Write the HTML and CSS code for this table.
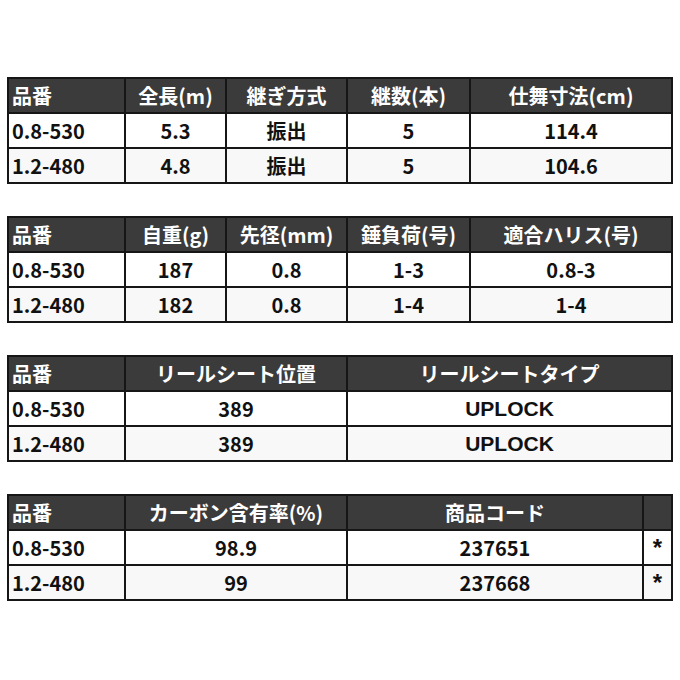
FILE: index.html
```html
<!DOCTYPE html>
<html lang="ja">
<head>
<meta charset="utf-8">
<link rel="stylesheet" href="styles.css">
</head>
<body>
<div class="page">
  <table class="spec">
    <colgroup><col class="c117"><col class="c101"><col class="c121"><col class="c123"><col></colgroup>
    <tr class="head"><th class="first">品番</th><th>全長(m)</th><th>継ぎ方式</th><th>継数(本)</th><th>仕舞寸法(cm)</th></tr>
    <tr class="r1"><td class="first">0.8-530</td><td>5.3</td><td>振出</td><td>5</td><td>114.4</td></tr>
    <tr class="r2"><td class="first">1.2-480</td><td>4.8</td><td>振出</td><td>5</td><td>104.6</td></tr>
  </table>
  <table class="spec">
    <colgroup><col class="c117"><col class="c101"><col class="c121"><col class="c123"><col></colgroup>
    <tr class="head"><th class="first">品番</th><th>自重(g)</th><th>先径(mm)</th><th>錘負荷(号)</th><th>適合ハリス(号)</th></tr>
    <tr class="r1"><td class="first">0.8-530</td><td>187</td><td>0.8</td><td>1-3</td><td>0.8-3</td></tr>
    <tr class="r2"><td class="first">1.2-480</td><td>182</td><td>0.8</td><td>1-4</td><td>1-4</td></tr>
  </table>
  <table class="spec">
    <colgroup><col class="c117"><col class="c222"><col></colgroup>
    <tr class="head"><th class="first">品番</th><th>リールシート位置</th><th>リールシートタイプ</th></tr>
    <tr class="r1"><td class="first">0.8-530</td><td>389</td><td class="latin">UPLOCK</td></tr>
    <tr class="r2"><td class="first">1.2-480</td><td>389</td><td class="latin">UPLOCK</td></tr>
  </table>
  <table class="spec">
    <colgroup><col class="c117"><col class="c222"><col class="c296"><col></colgroup>
    <tr class="head"><th class="first">品番</th><th>カーボン含有率(%)</th><th>商品コード</th><th></th></tr>
    <tr class="r1"><td class="first">0.8-530</td><td>98.9</td><td>237651</td><td class="mark">*</td></tr>
    <tr class="r2"><td class="first">1.2-480</td><td>99</td><td>237668</td><td class="mark">*</td></tr>
  </table>
</div>
</body>
</html>
```
FILE: styles.css
```css
html, body {
  margin: 0;
  padding: 0;
  background: #ffffff;
}
.page {
  padding: 77px 7px 0 7px;
  display: flex;
  flex-direction: column;
  gap: 32px;
}
.spec {
  width: 666px;
  border-collapse: collapse;
  table-layout: fixed;
  font-family: "Noto Sans CJK JP", "Noto Sans", sans-serif;
  font-weight: bold;
  font-size: 20px;
  color: #111111;
}
.spec th, .spec td {
  border: 2px solid #161616;
  height: 33px;
  padding: 0 4px;
  text-align: center;
  vertical-align: middle;
  line-height: 20px;
  white-space: nowrap;
}
.spec .head th {
  background: #3b3b3b;
  color: #ffffff;
  font-weight: bold;
}
.spec .first {
  text-align: left;
  padding-left: 3px;
}
.spec .r1 td { background: #ffffff; }
.spec .r2 td { background: #f8f8f8; }
.spec .latin {
  font-family: "Liberation Sans", Arial, sans-serif;
  font-size: 21px;
}
.spec .mark {
  font-family: "Liberation Sans", Arial, sans-serif;
  font-size: 24px;
  padding: 0;
}
.c117 { width: 117px; }
.c101 { width: 101px; }
.c121 { width: 121px; }
.c123 { width: 123px; }
.c222 { width: 222px; }
.c296 { width: 296px; }
```
